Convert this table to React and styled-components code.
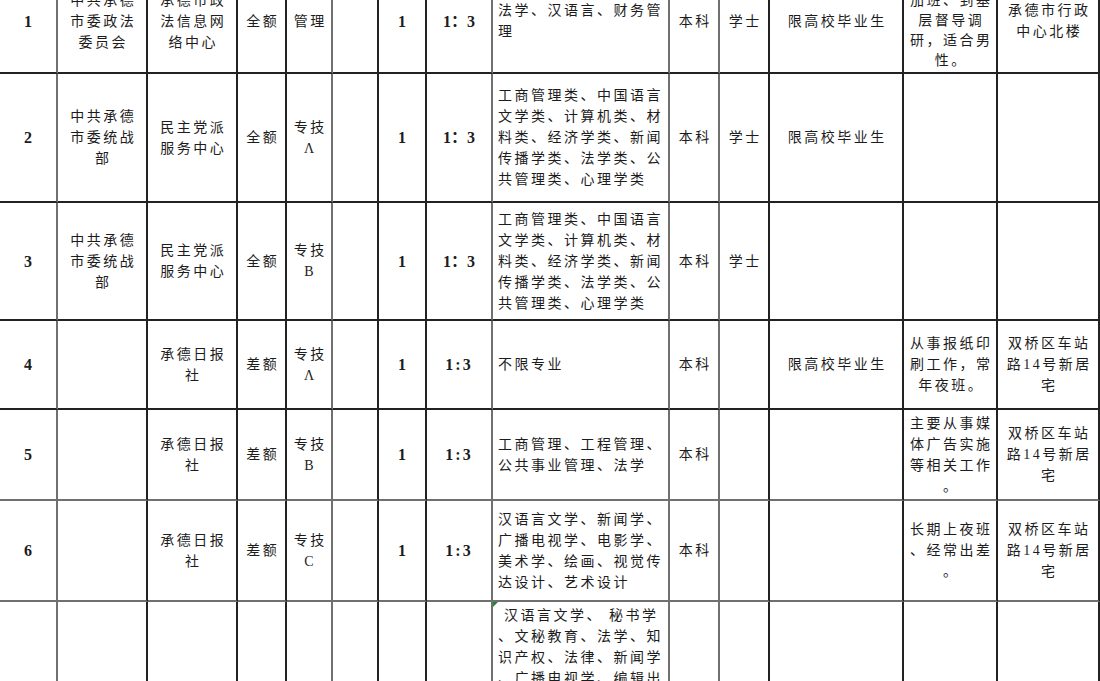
import React from "react";
import styled, { createGlobalStyle, css } from "styled-components";

const GlobalStyle = createGlobalStyle`
  * { box-sizing: border-box; }
  html, body { margin: 0; padding: 0; background: #fff; }
  body {
    font-family: "Liberation Serif", "Noto Sans CJK SC", serif;
    color: #1c1c1c;
  }
`;

const DARK = "#222";
const GRAY = "#707070";

// column widths and the colour of the rule on their right
const columns = [
  { w: 58, rule: GRAY },
  { w: 90, rule: DARK },
  { w: 90, rule: DARK },
  { w: 49, rule: DARK },
  { w: 46, rule: GRAY },
  { w: 46, rule: DARK },
  { w: 48, rule: DARK },
  { w: 66, rule: GRAY },
  { w: 177, rule: GRAY },
  { w: 50, rule: GRAY },
  { w: 50, rule: DARK },
  { w: 134, rule: DARK },
  { w: 94, rule: DARK },
  { w: 102, rule: DARK },
];

const rows = [
  {
    h: 104,
    base: DARK,
    tight: 12,
    cells: ["1", "中共承德|市委政法|委员会", "承德市政|法信息网|络中心", "全额", "管理", "", "1", "1：3",
      "法学、汉语言、财务管|理", "本科", "学士", "限高校毕业生",
      "工作需经常|加班、到基|层督导调|研，适合男|性。", "承德市行政|中心北楼"],
  },
  {
    h: 129,
    base: DARK,
    cells: ["2", "中共承德|市委统战|部", "民主党派|服务中心", "全额", "专技|Λ", "", "1", "1：3",
      "工商管理类、中国语言|文学类、计算机类、材|料类、经济学类、新闻|传播学类、法学类、公|共管理类、心理学类",
      "本科", "学士", "限高校毕业生", "", ""],
  },
  {
    h: 118,
    base: DARK,
    cells: ["3", "中共承德|市委统战|部", "民主党派|服务中心", "全额", "专技|B", "", "1", "1：3",
      "工商管理类、中国语言|文学类、计算机类、材|料类、经济学类、新闻|传播学类、法学类、公|共管理类、心理学类",
      "本科", "学士", "", "", ""],
  },
  {
    h: 89,
    base: DARK,
    cells: ["4", "", "承德日报|社", "差额", "专技|Λ", "", "1", "1:3", "不限专业", "本科", "", "限高校毕业生",
      "从事报纸印|刷工作，常|年夜班。", "双桥区车站|路14号新居|宅"],
  },
  {
    h: 91,
    base: GRAY,
    cells: ["5", "", "承德日报|社", "差额", "专技|B", "", "1", "1:3",
      "工商管理、工程管理、|公共事业管理、法学", "本科", "", "",
      "主要从事媒|体广告实施|等相关工作|。", "双桥区车站|路14号新居|宅"],
  },
  {
    h: 101,
    base: GRAY,
    cells: ["6", "", "承德日报|社", "差额", "专技|C", "", "1", "1:3",
      "汉语言文学、新闻学、|广播电视学、电影学、|美术学、绘画、视觉传|达设计、艺术设计", "本科", "", "",
      "长期上夜班|、经常出差|。", "双桥区车站|路14号新居|宅"],
  },
  {
    h: 180,
    base: DARK,
    top: true,
    flag: 8,
    cells: ["", "", "", "", "", "", "", "",
      "\u00a0汉语言文学、\u00a0秘书学|、文秘教育、法学、知|识产权、法律、新闻学|、广播电视学、编辑出|版学、行政管理、公共|事业管理",
      "", "", "", "", ""],
  },
];

const Sheet = styled.div`
  width: 1100px;
  height: 681px;
  overflow: hidden;
  background: #fff;
`;

const Grid = styled.table`
  width: 1100px;
  margin-top: -30px;
  table-layout: fixed;
  border-collapse: separate;
  border-spacing: 0;
`;

const Row = styled.tr`
  height: ${(p) => p.$h}px;
`;

const Cell = styled.td`
  position: relative;
  padding: ${(p) => (p.$top ? "3px" : "0")} 2px 0 ${(p) => (p.$left ? "5px" : "4.5px")};
  border-right: 2px solid ${(p) => p.$rule};
  border-bottom: 2px solid ${(p) => p.$base};
  vertical-align: ${(p) => (p.$top ? "top" : "middle")};
  text-align: ${(p) => (p.$left ? "left" : "center")};
  font-size: 14px;
  line-height: ${(p) => (p.$tight ? "20px" : "21px")};
  letter-spacing: 2.5px;
  white-space: nowrap;
  overflow: hidden;

  ${(p) =>
    p.$num &&
    css`
      padding-left: 2px;
      font-size: 16px;
      font-weight: 700;
      letter-spacing: ${p.$ratio ? "2px" : "0"};
    `}

  ${(p) =>
    p.$flag &&
    css`
      &::before {
        content: "";
        position: absolute;
        top: 0;
        left: 0;
        border-top: 5px solid #1f8a2c;
        border-right: 5px solid transparent;
      }
    `}
`;

const Line = styled.span`
  display: block;
`;

export default function App() {
  return (
    <>
      <GlobalStyle />
      <Sheet>
        <Grid>
          <colgroup>
            {columns.map((c, i) => (
              <col key={i} style={{ width: c.w }} />
            ))}
          </colgroup>
          <tbody>
            {rows.map((row, r) => (
              <Row key={r} $h={row.h}>
                {row.cells.map((text, i) => (
                  <Cell
                    key={i}
                    $rule={columns[i].rule}
                    $base={row.base}
                    $left={i === 8}
                    $num={i === 0 || i === 6 || i === 7}
                    $ratio={i === 7 && text === "1:3"}
                    $top={row.top}
                    $tight={row.tight === i}
                    $flag={row.flag === i}
                  >
                    {text
                      ? text.split("|").map((line, k) => <Line key={k}>{line}</Line>)
                      : null}
                  </Cell>
                ))}
              </Row>
            ))}
          </tbody>
        </Grid>
      </Sheet>
    </>
  );
}
